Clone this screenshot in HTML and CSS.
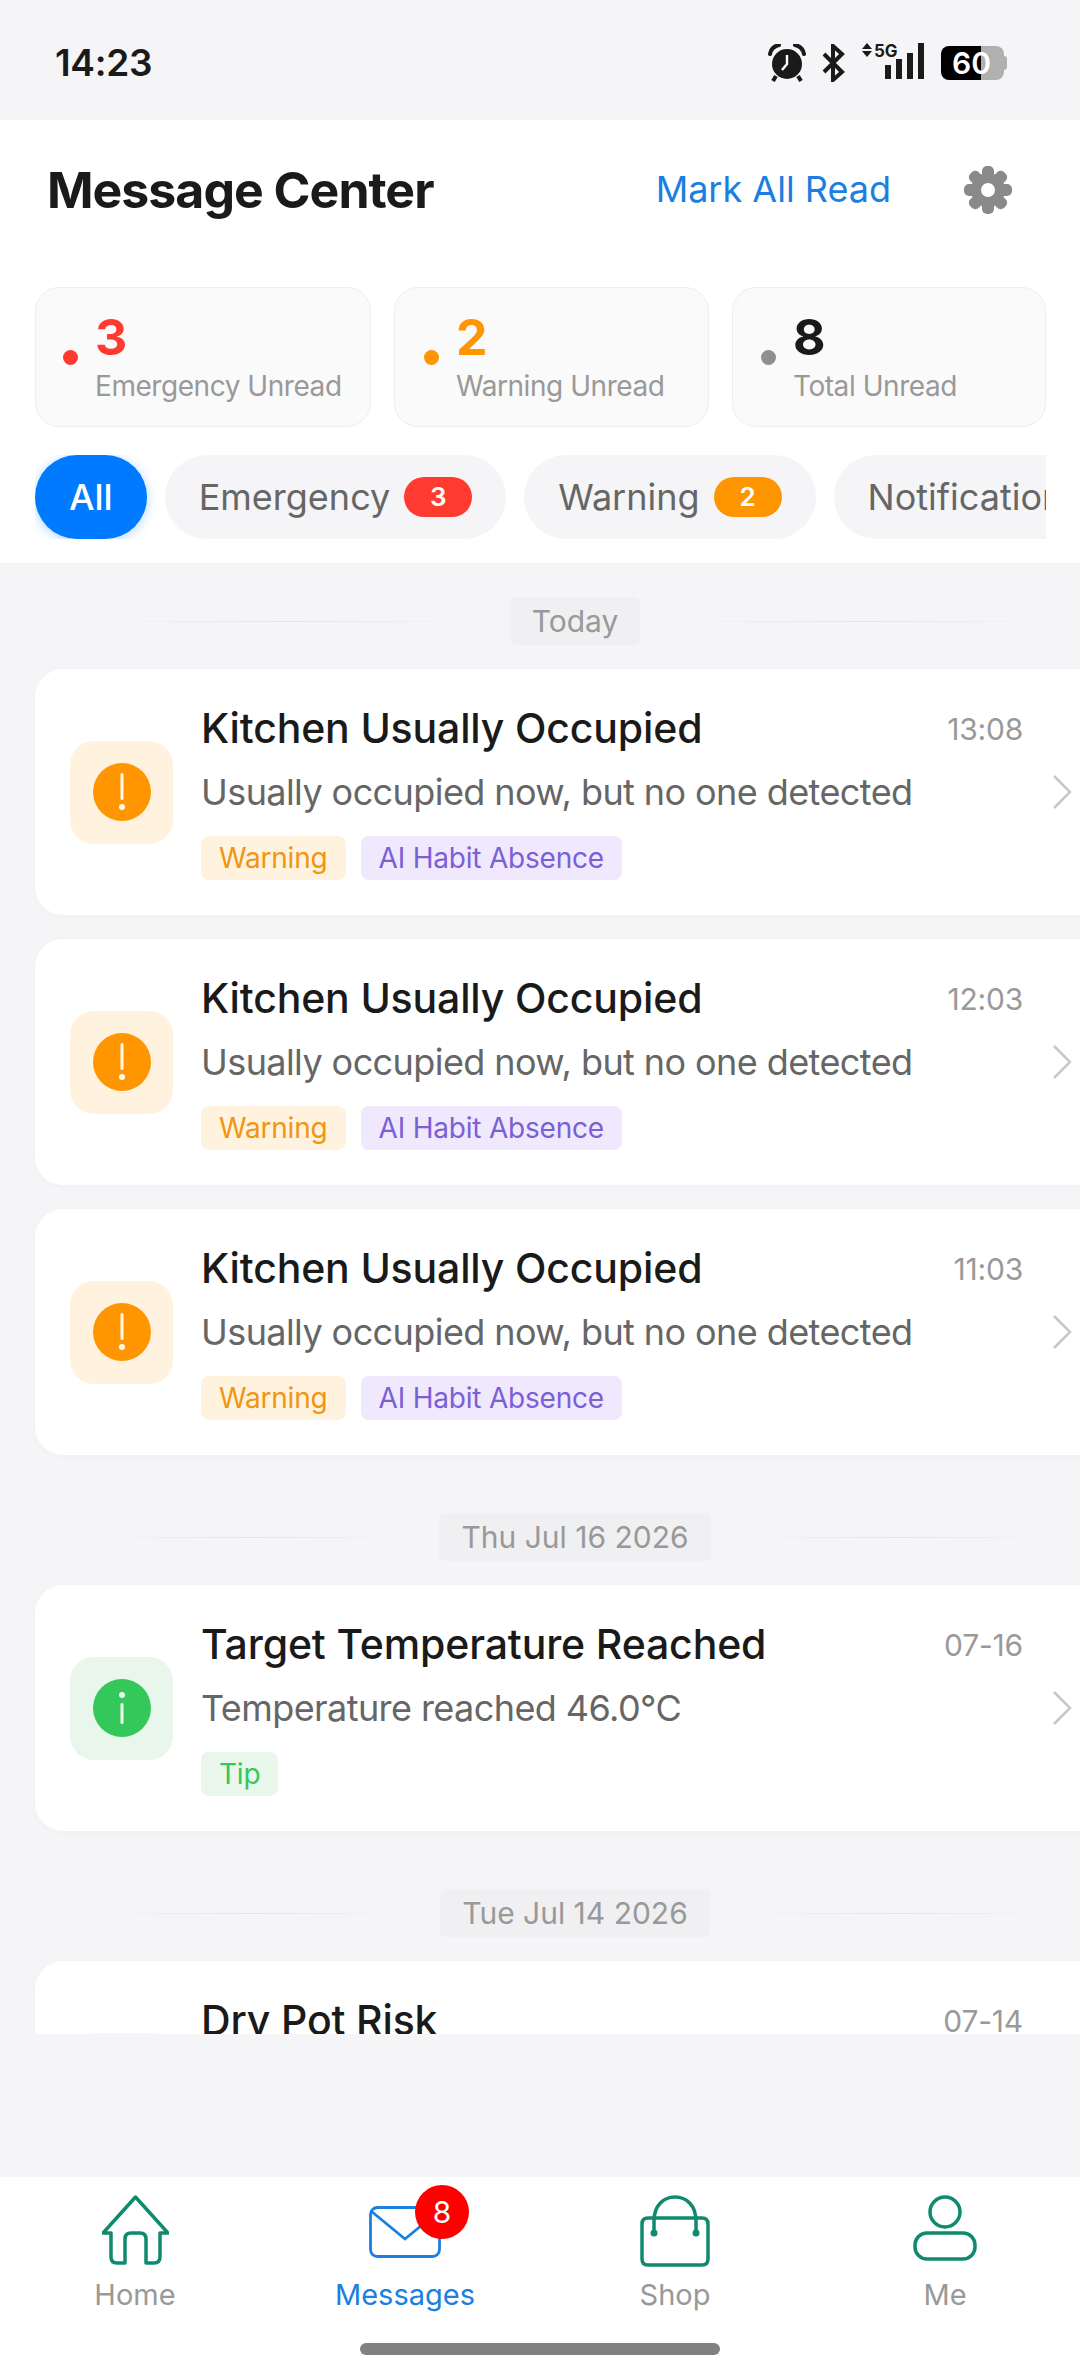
FILE: index.html
```html
<!DOCTYPE html>
<html lang="en">
<head>
    <meta charset="UTF-8">
    <title>Message Center</title>
    <link rel="stylesheet" href="styles.css">
</head>
<body>
<div class="page">
    <!-- status bar -->
    <div class="status">
        <span class="clock">14:23</span>
        <div class="status-icons">
            <svg class="ic-alarm" width="38" height="38" viewBox="0 0 38 38">
                <circle cx="19" cy="20" r="15" fill="#1a1a1a"/>
                <path d="M19 11v9l-5 6" fill="none" stroke="#fff" stroke-width="2.4"/>
                <path d="M2 10C3 5 6 2 11 1M36 10C35 5 32 2 27 1" fill="none" stroke="#1a1a1a" stroke-width="4" stroke-linecap="round"/>
                <path d="M8 32l-3 5M30 32l3 5" stroke="#1a1a1a" stroke-width="4"/>
            </svg>
            <svg class="ic-bt" width="23" height="38" viewBox="0 0 23 38">
                <path d="M2 10l18 18-9 8V2l9 8L2 28" fill="none" stroke="#1a1a1a" stroke-width="4"/>
            </svg>
            <div class="signal">
                <svg width="64" height="38" viewBox="0 0 64 38">
                    <path d="M1 7l5-6 5 6zM1 9l5 6 5-6z" fill="#1a1a1a"/>
                    <text x="13" y="15" class="five-g">5G</text>
                    <rect x="24" y="23" width="6" height="14" fill="#1a1a1a"/>
                    <rect x="35" y="17" width="6" height="20" fill="#1a1a1a"/>
                    <rect x="46" y="11" width="6" height="26" fill="#1a1a1a"/>
                    <rect x="57" y="1" width="6" height="36" fill="#1a1a1a"/>
                </svg>
            </div>
            <div class="battery"><span>60</span></div>
        </div>
    </div>

    <!-- header -->
    <div class="head">
        <div class="head-row">
            <h1 class="title">Message Center</h1>
            <span class="mark-read">Mark All Read</span>
            <svg class="gear" width="48" height="48" viewBox="0 0 48 48">
                <g fill="#8a8a8a">
                    <circle cx="24" cy="24" r="17"/>
                    <rect x="18" y="0" width="12" height="48" rx="5"/>
                    <rect x="18" y="0" width="12" height="48" rx="5" transform="rotate(45 24 24)"/>
                    <rect x="18" y="0" width="12" height="48" rx="5" transform="rotate(90 24 24)"/>
                    <rect x="18" y="0" width="12" height="48" rx="5" transform="rotate(135 24 24)"/>
                </g>
                <circle cx="24" cy="24" r="7" fill="#fff"/>
            </svg>
        </div>

        <div class="stats">
            <div class="stat stat-a">
                <i class="dot red"></i>
                <div>
                    <div class="num c-red">3</div>
                    <div class="lbl">Emergency Unread</div>
                </div>
            </div>
            <div class="stat stat-b">
                <i class="dot orange"></i>
                <div>
                    <div class="num c-orange">2</div>
                    <div class="lbl">Warning Unread</div>
                </div>
            </div>
            <div class="stat stat-c">
                <i class="dot grey"></i>
                <div>
                    <div class="num">8</div>
                    <div class="lbl">Total Unread</div>
                </div>
            </div>
        </div>

        <div class="chips">
            <span class="chip on">All</span>
            <span class="chip">Emergency <b class="count red">3</b></span>
            <span class="chip">Warning <b class="count orange">2</b></span>
            <span class="chip">Notifications</span>
        </div>
    </div>

    <!-- message list -->
    <div class="list">
        <div class="day-row"><i class="line"></i><span class="day">Today</span><i class="line"></i></div>

        <div class="card">
            <div class="icon i-warn"><svg width="58" height="58" viewBox="0 0 58 58"><circle cx="29" cy="29" r="29" fill="#ff9500"/><rect x="27.5" y="10" width="3" height="27" rx="1.5" fill="#fff8ee"/><circle cx="29" cy="44" r="3" fill="#fff8ee"/></svg></div>
            <div class="body">
                <div class="top"><span class="name">Kitchen Usually Occupied</span><span class="time">13:08</span></div>
                <div class="desc">Usually occupied now, but no one detected</div>
                <div class="tags"><span class="tag t-warn">Warning</span><span class="tag t-ai">AI Habit Absence</span></div>
            </div>
            <svg class="arrow" width="22" height="36" viewBox="0 0 22 36"><path d="M3 2l16 16L3 34" fill="none" stroke="#c8c8c8" stroke-width="2.5"/></svg>
        </div>

        <div class="card">
            <div class="icon i-warn"><svg width="58" height="58" viewBox="0 0 58 58"><circle cx="29" cy="29" r="29" fill="#ff9500"/><rect x="27.5" y="10" width="3" height="27" rx="1.5" fill="#fff8ee"/><circle cx="29" cy="44" r="3" fill="#fff8ee"/></svg></div>
            <div class="body">
                <div class="top"><span class="name">Kitchen Usually Occupied</span><span class="time">12:03</span></div>
                <div class="desc">Usually occupied now, but no one detected</div>
                <div class="tags"><span class="tag t-warn">Warning</span><span class="tag t-ai">AI Habit Absence</span></div>
            </div>
            <svg class="arrow" width="22" height="36" viewBox="0 0 22 36"><path d="M3 2l16 16L3 34" fill="none" stroke="#c8c8c8" stroke-width="2.5"/></svg>
        </div>

        <div class="card">
            <div class="icon i-warn"><svg width="58" height="58" viewBox="0 0 58 58"><circle cx="29" cy="29" r="29" fill="#ff9500"/><rect x="27.5" y="10" width="3" height="27" rx="1.5" fill="#fff8ee"/><circle cx="29" cy="44" r="3" fill="#fff8ee"/></svg></div>
            <div class="body">
                <div class="top"><span class="name">Kitchen Usually Occupied</span><span class="time">11:03</span></div>
                <div class="desc">Usually occupied now, but no one detected</div>
                <div class="tags"><span class="tag t-warn">Warning</span><span class="tag t-ai">AI Habit Absence</span></div>
            </div>
            <svg class="arrow" width="22" height="36" viewBox="0 0 22 36"><path d="M3 2l16 16L3 34" fill="none" stroke="#c8c8c8" stroke-width="2.5"/></svg>
        </div>

        <div class="day-row gap"><i class="line"></i><span class="day">Thu Jul 16 2026</span><i class="line"></i></div>

        <div class="card">
            <div class="icon i-tip"><svg width="58" height="58" viewBox="0 0 58 58"><circle cx="29" cy="29" r="29" fill="#34c759"/><circle cx="29" cy="16" r="3" fill="#eefaf1"/><rect x="27.5" y="24" width="3" height="21" rx="1.5" fill="#eefaf1"/></svg></div>
            <div class="body">
                <div class="top"><span class="name">Target Temperature Reached</span><span class="time">07-16</span></div>
                <div class="desc">Temperature reached 46.0°C</div>
                <div class="tags"><span class="tag t-tip">Tip</span></div>
            </div>
            <svg class="arrow" width="22" height="36" viewBox="0 0 22 36"><path d="M3 2l16 16L3 34" fill="none" stroke="#c8c8c8" stroke-width="2.5"/></svg>
        </div>

        <div class="day-row gap"><i class="line"></i><span class="day">Tue Jul 14 2026</span><i class="line"></i></div>

        <div class="card">
            <div class="icon i-risk"></div>
            <div class="body">
                <div class="top"><span class="name">Dry Pot Risk</span><span class="time">07-14</span></div>
            </div>
            <svg class="arrow" width="22" height="36" viewBox="0 0 22 36"><path d="M3 2l16 16L3 34" fill="none" stroke="#c8c8c8" stroke-width="2.5"/></svg>
        </div>
    </div>

    <div class="spacer"></div>

    <!-- bottom tabs -->
    <div class="nav">
        <div class="tabs">
            <div class="tab">
                <svg width="67" height="70" viewBox="0 0 67 70"><path d="M33.500 2L66 38H58V62Q58 68 52 68H44V44Q44 38 38 38H29Q23 38 23 44V68H15Q9 68 9 62V38H1Z" fill="none" stroke="#0f8a6e" stroke-width="3.500" stroke-linejoin="round"/></svg>
                <span>Home</span>
            </div>
            <div class="tab active">
                <div class="mail">
                    <svg width="72" height="52" viewBox="0 0 72 52"><rect x="1.500" y="1.500" width="69" height="49" rx="7" fill="#fff" stroke="#1a7fe0" stroke-width="2.800"/><path d="M2 5l34 28L70 5" fill="none" stroke="#1a7fe0" stroke-width="2.800"/></svg>
                    <b class="unread">8</b>
                </div>
                <span>Messages</span>
            </div>
            <div class="tab">
                <svg width="70" height="72" viewBox="0 0 70 72"><path d="M8 23H62Q68 23 68 29V64Q68 70 62 70H8Q2 70 2 64V29Q2 23 8 23Z" fill="none" stroke="#0f8a6e" stroke-width="3.500"/><path d="M14 38V26C14 10 24 2 35 2S56 10 56 26V38" fill="none" stroke="#0f8a6e" stroke-width="3.500"/><circle cx="14" cy="38" r="3.500" fill="#0f8a6e"/><circle cx="56" cy="38" r="3.500" fill="#0f8a6e"/></svg>
                <span>Shop</span>
            </div>
            <div class="tab">
                <svg width="64" height="66" viewBox="0 0 64 66"><circle cx="32" cy="17" r="15" fill="none" stroke="#0f8a6e" stroke-width="3.500"/><rect x="2" y="38" width="60" height="26" rx="12" fill="none" stroke="#0f8a6e" stroke-width="3.500"/></svg>
                <span>Me</span>
            </div>
        </div>
        <div class="home-bar"></div>
    </div>
</div>
</body>
</html>
```

FILE: styles.css
```css
*{
    box-sizing: border-box;
}
body{
    margin: 0;
    background: #f5f5f7;
    font-family: Inter, "Noto Sans", sans-serif;
    color: #1a1a1a;
}
.page{
    width: 1080px;
    height: 2376px;
    display: flex;
    flex-direction: column;
    overflow: hidden;
}

/* status bar */
.status{
    height: 120px;
    flex: none;
    display: flex;
    justify-content: space-between;
    align-items: center;
    padding: 5px 73px 0 55px;
}
.clock{
    font-size: 37px;
    font-weight: 600;
    letter-spacing: -0.3px;
}
.status-icons{
    display: flex;
    align-items: center;
    gap: 16px;
}
.five-g{
    font-size: 17px;
    font-weight: 700;
    fill: #1a1a1a;
}
.battery{
    position: relative;
    width: 63px;
    height: 34px;
    margin-right: 3px;
    border-radius: 8px;
    background: linear-gradient(90deg, #000 0, #000 40px, #b0b0b0 40px);
    color: #fff;
    font-size: 30px;
    font-weight: 600;
    line-height: 34px;
    padding-left: 11px;
}
.battery::after{
    content: "";
    position: absolute;
    right: -3px;
    top: 10px;
    width: 3px;
    height: 14px;
    border-radius: 0 3px 3px 0;
    background: #b0b0b0;
}

/* header */
.head{
    flex: none;
    background: #fff;
    padding: 0 34px 24px 35px;
}
.head-row{
    height: 140px;
    display: flex;
    align-items: center;
}
.title{
    margin: 0 0 0 12px;
    font-size: 50px;
    font-weight: 700;
    letter-spacing: -1px;
    flex: 1;
}
.mark-read{
    font-size: 36px;
    color: #1a7fe0;
    margin: 0 73px 2px 0;
}
.gear{
    margin-right: 34px;
}
.stats{
    margin-top: 27px;
    display: flex;
    gap: 23px;
}
.stat{
    height: 140px;
    background: #fafafa;
    border: 1px solid #eee;
    border-radius: 24px;
    display: flex;
    padding: 21px 0 0 27px;
}
.stat-a{
    width: 336px;
}
.stat-b{
    width: 315px;
    padding-left: 29px;
}
.stat-c{
    width: 314px;
    padding-left: 28px;
}
.dot{
    width: 15px;
    height: 15px;
    border-radius: 50%;
    margin: 41px 17px 0 0;
    flex: none;
}
.red{
    background: #ff3b30;
}
.orange{
    background: #ff9500;
}
.grey{
    background: #8e8e93;
}
.num{
    font-size: 50px;
    font-weight: 700;
    line-height: 56px;
}
.c-red{
    color: #ff3b30;
}
.c-orange{
    color: #ff9500;
}
.lbl{
    font-size: 28px;
    color: #999;
    line-height: 36px;
    margin-top: 3px;
    letter-spacing: -0.45px;
}
.chips{
    margin-top: 28px;
    display: flex;
    gap: 18px;
    overflow: hidden;
    flex-wrap: nowrap;
}
.chip{
    height: 84px;
    flex: none;
    border-radius: 42px;
    background: #f5f5f7;
    color: #666;
    font-size: 36px;
    padding: 0 34px;
    display: flex;
    align-items: center;
    gap: 14px;
}
.chip.on{
    background: #007aff;
    color: #fff;
    font-weight: 500;
    padding: 0 34px;
    box-shadow: 0 2px 12px rgba(0,122,255,0.3);
}
.count{
    width: 68px;
    height: 40px;
    border-radius: 20px;
    color: #fff;
    font-size: 26px;
    font-weight: 600;
    text-align: center;
    line-height: 40px;
}

/* list */
.list{
    flex: none;
    height: 1471px;
    overflow: hidden;
    padding: 34px 0 0 35px;
}
.day-row{
    width: 1080px;
    height: 48px;
    margin-bottom: 24px;
    padding: 0 60px;
    display: flex;
    align-items: center;
    gap: 30px;
}
.day-row.gap{
    margin-top: 58px;
}
.line{
    flex: 1;
    height: 1px;
    background: linear-gradient(90deg, rgba(225,225,228,0), #e4e4e7 50%, rgba(225,225,228,0));
}
.day{
    height: 48px;
    line-height: 48px;
    padding: 0 22px;
    background: #f0f0f2;
    border-radius: 6px;
    color: #999;
    font-size: 30px;
}
.card{
    width: 1080px;
    height: 246px;
    margin-bottom: 24px;
    background: #fff;
    border-radius: 28px;
    box-shadow: 0 2px 10px rgba(0,0,0,0.02);
    display: flex;
    align-items: center;
    padding: 0 42px 0 35px;
}
.icon{
    width: 103px;
    height: 103px;
    flex: none;
    border-radius: 24px;
    display: flex;
    align-items: center;
    justify-content: center;
}
.i-warn{
    background: #fff3e0;
}
.i-tip{
    background: #e8f6ec;
}
.i-risk{
    background: #fff8e0;
}
.body{
    flex: 1;
    align-self: flex-start;
    padding-top: 35px;
    margin: 0 28px;
}
.top{
    display: flex;
    justify-content: space-between;
    align-items: center;
    height: 48px;
}
.name{
    font-size: 41px;
    font-weight: 500;
    letter-spacing: -0.15px;
}
.time{
    font-size: 30px;
    color: #999;
    letter-spacing: -0.2px;
    margin-top: 2px;
}
.desc{
    margin-top: 16px;
    font-size: 36px;
    line-height: 48px;
    color: #666;
    letter-spacing: -0.58px;
}
.tags{
    margin-top: 20px;
    display: flex;
    gap: 15px;
}
.tag{
    height: 44px;
    line-height: 44px;
    padding: 0 18px;
    border-radius: 8px;
    font-size: 28px;
    letter-spacing: -0.2px;
}
.t-warn{
    background: #fff3e0;
    color: #f0960f;
}
.t-ai{
    background: #f0e8fc;
    color: #7b5fd6;
}
.t-tip{
    background: #e8f6ec;
    color: #34c759;
}
.arrow{
    flex: none;
}
.spacer{
    flex: 1;
}

/* bottom tabs */
.nav{
    height: 199px;
    flex: none;
    background: #fff;
    position: relative;
}
.tabs{
    display: flex;
    height: 150px;
    padding-top: 18px;
}
.tab{
    width: 270px;
    display: flex;
    flex-direction: column;
    align-items: center;
    font-size: 29px;
    color: #999;
}
.tab span{
    position: absolute;
    top: 100px;
}
.tab.active{
    color: #1a7fe0;
}
.mail{
    position: relative;
    margin-top: 11px;
}
.unread{
    position: absolute;
    top: -21px;
    left: 46px;
    width: 54px;
    height: 54px;
    border-radius: 50%;
    background: #f00;
    color: #fff;
    font-size: 30px;
    font-weight: 400;
    line-height: 54px;
    text-align: center;
}
.home-bar{
    width: 360px;
    height: 12px;
    border-radius: 6px;
    background: #808080;
    margin: 16px auto 0;
}
```
